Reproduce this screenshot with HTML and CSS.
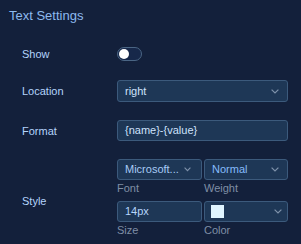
FILE: index.html
```html
<!DOCTYPE html>
<html>
<head>
<meta charset="utf-8">
<link rel="stylesheet" href="styles.css">
</head>
<body>
<div class="panel">
  <div class="title">Text Settings</div>
  <div class="rows">
    <div class="row row-show">
      <div class="label">Show</div>
      <div class="ctrl"><span class="switch"><span class="knob"></span></span></div>
    </div>
    <div class="row">
      <div class="label">Location</div>
      <div class="ctrl">
        <div class="box select"><span class="val">right</span>
          <svg class="chev" width="8" height="5" viewBox="0 0 8 5"><polyline points="0.6,0.6 4,4 7.4,0.6" fill="none" stroke="#7f92aa" stroke-width="1.2"/></svg>
        </div>
      </div>
    </div>
    <div class="row">
      <div class="label">Format</div>
      <div class="ctrl"><div class="box input fmt">{name}-{value}</div></div>
    </div>
    <div class="row">
      <div class="label">Style</div>
      <div class="ctrl style-grid">
        <div class="box select narrow"><span class="val">Microsoft...</span>
          <svg class="chev" width="7" height="5" viewBox="0 0 7 5"><polyline points="0.6,0.6 3.5,3.6 6.4,0.6" fill="none" stroke="#7f92aa" stroke-width="1.1"/></svg>
        </div>
        <div class="box select"><span class="val blue">Normal</span>
          <svg class="chev" width="8" height="5" viewBox="0 0 8 5"><polyline points="0.6,0.6 4,4 7.4,0.6" fill="none" stroke="#7f92aa" stroke-width="1.2"/></svg>
        </div>
        <div class="cap">Font</div>
        <div class="cap">Weight</div>
        <div class="box input">14px</div>
        <div class="box select color"><span class="swatch"></span>
          <svg class="chev" width="8" height="5" viewBox="0 0 8 5"><polyline points="0.6,0.6 4,4 7.4,0.6" fill="none" stroke="#7f92aa" stroke-width="1.2"/></svg>
        </div>
        <div class="cap">Size</div>
        <div class="cap">Color</div>
      </div>
    </div>
  </div>
</div>
</body>
</html>
```

FILE: styles.css
```css
html, body {
  margin: 0;
  padding: 0;
  background: #13203b;
}
body {
  width: 301px;
  height: 244px;
  overflow: hidden;
  font-family: "Liberation Sans", Arial, sans-serif;
}
.panel {
  padding: 8px 0 0 9px;
}
.title {
  font-size: 13px;
  line-height: 16px;
  color: #8db9ee;
}
.rows {
  margin-top: 22px;
  padding-left: 13px;
  display: flex;
  flex-direction: column;
  gap: 18px;
}
.row {
  display: flex;
  align-items: center;
}
.row-show {
  height: 16px;
}
.label {
  width: 95px;
  font-size: 11px;
  color: #b3d4fb;
}
.ctrl {
  width: 171px;
}
.switch {
  display: flex;
  align-items: center;
  box-sizing: border-box;
  width: 25px;
  height: 14px;
  border: 1px solid #4a6584;
  border-radius: 7px;
  background: #17284a;
  padding-left: 1px;
}
.knob {
  width: 10px;
  height: 10px;
  border-radius: 50%;
  background: #ffffff;
}
.box {
  box-sizing: border-box;
  height: 22px;
  border: 1px solid #3c5a7c;
  border-radius: 3px;
  background: #1e3756;
  font-size: 11px;
  line-height: 19px;
  color: #cfe2fc;
  display: flex;
  align-items: center;
}
.box.fmt {
  height: 21px;
}
.input {
  padding-left: 7px;
}
.select {
  padding: 0 8px 0 7px;
  justify-content: space-between;
}
.select.narrow {
  padding-right: 10px;
}
.val {
  color: #cfe2fc;
}
.style-grid .val {
  color: #a8cbf5;
}
.style-grid .val.blue {
  color: #86bbfb;
}
.style-grid .input {
  color: #b7d5fc;
}
.chev {
  display: block;
  flex: none;
}
.style-grid {
  display: grid;
  grid-template-columns: 85px 84px;
  column-gap: 2px;
}
.style-grid .box {
  height: 21px;
}
.cap {
  font-size: 11px;
  line-height: 14px;
  height: 21px;
  padding-top: 1px;
  box-sizing: border-box;
  color: #7f8ea5;
}
.color {
  padding-right: 5px;
  padding-left: 6px;
}
.swatch {
  width: 13px;
  height: 13px;
  background: #e0f5ff;
}
```
